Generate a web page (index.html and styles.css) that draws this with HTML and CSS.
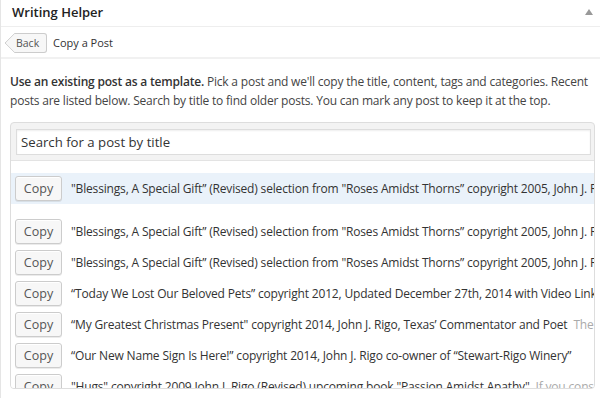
FILE: index.html
```html
<!DOCTYPE html>
<html>
<head>
<meta charset="utf-8">
<link rel="stylesheet" href="styles.css">
</head>
<body>
<div class="postbox">
  <div class="hndle">
    <span class="title">Writing Helper</span>
    <span class="toggle"></span>
  </div>
  <div class="nav">
    <span class="back">Back</span>
    <span class="nav-title">Copy a Post</span>
  </div>
  <div class="inside">
    <p class="intro"><strong>Use an existing post as a template.</strong> Pick a post and we'll copy the title, content, tags and categories. Recent posts are listed below. Search by title to find older posts. You can mark any post to keep it at the top.</p>
    <div class="box">
      <div class="search-wrap">
        <input class="search" type="text" value="Search for a post by title">
      </div>
      <ul class="list">
        <li class="row marked"><span class="btn">Copy</span><span class="ttl">"Blessings, A Special Gift” (Revised) selection from "Roses Amidst Thorns” copyright 2005, John J. Rigo</span></li>
        <li class="row"><span class="btn">Copy</span><span class="ttl">"Blessings, A Special Gift” (Revised) selection from "Roses Amidst Thorns” copyright 2005, John J. Rigo</span></li>
        <li class="row"><span class="btn">Copy</span><span class="ttl">"Blessings, A Special Gift” (Revised) selection from "Roses Amidst Thorns” copyright 2005, John J. Rigo</span></li>
        <li class="row"><span class="btn">Copy</span><span class="ttl">“Today We Lost Our Beloved Pets” copyright 2012, Updated December 27th, 2014 with Video Link</span></li>
        <li class="row"><span class="btn">Copy</span><span class="ttl">“My Greatest Christmas Present" copyright 2014, John J. Rigo, Texas’ Commentator and Poet <span class="ex">The</span></span></li>
        <li class="row"><span class="btn">Copy</span><span class="ttl">“Our New Name Sign Is Here!” copyright 2014, John J. Rigo co-owner of “Stewart-Rigo Winery”</span></li>
        <li class="row"><span class="btn">Copy</span><span class="ttl">"Hugs" copyright 2009 John J. Rigo (Revised) upcoming book "Passion Amidst Apathy" <span class="ex">If you consider</span></span></li>
      </ul>
    </div>
  </div>
</div>
</body>
</html>
```

FILE: styles.css
```css
html, body {
  margin: 0;
  padding: 0;
  background: #fff;
}
body {
  font-family: "Open Sans", "DejaVu Sans", sans-serif;
  color: #444;
  overflow: hidden;
  height: 398px;
}
.postbox {
  border-left: 1px solid #e5e5e5;
  height: 398px;
  box-sizing: border-box;
  overflow: hidden;
}
.hndle {
  height: 27px;
  border-bottom: 1px solid #eee;
  display: flex;
  align-items: center;
  justify-content: space-between;
  padding: 0 7px 0 11px;
  box-sizing: border-box;
}
.title {
  font-size: 13px;
  font-weight: 600;
  color: #222;
  line-height: 20px;
  margin-top: -2px;
}
.toggle {
  width: 0;
  height: 0;
  border-left: 4px solid transparent;
  border-right: 4px solid transparent;
  border-bottom: 6px solid #999;
  margin-top: -3px;
}
.nav {
  height: 32px;
  border-bottom: 2px solid #f1f1f1;
  display: flex;
  align-items: center;
  padding-left: 9px;
  box-sizing: border-box;
}
.back {
  position: relative;
  z-index: 0;
  width: 33px;
  height: 20px;
  box-sizing: border-box;
  border: 1px solid #ccc;
  border-left: none;
  border-radius: 0 3px 3px 0;
  background: #f7f7f7;
  font-size: 10.5px;
  color: #555;
  line-height: 18px;
  padding: 0 0 0 2px;
  margin-left: 4px;
  margin-top: 1px;
}
.back::before {
  content: "";
  position: absolute;
  z-index: -1;
  left: -7px;
  top: 2px;
  width: 13px;
  height: 13px;
  background: #f7f7f7;
  border-left: 1px solid #ccc;
  border-bottom: 1px solid #ccc;
  border-radius: 0 0 0 2px;
  transform: rotate(45deg);
}
.nav-title {
  font-size: 11px;
  color: #333;
  margin-left: 6px;
}
.inside {
  padding: 0 5px 0 9px;
}
.intro {
  margin: 13px 0 12px;
  font-size: 12px;
  letter-spacing: -0.2px;
  line-height: 19px;
  color: #444;
}
.intro strong {
  font-weight: 600;
  color: #333;
}
.box {
  border: 1px solid #ddd;
  border-radius: 4px;
  background: #f3f3f3;
  height: 267px;
  overflow: hidden;
  box-sizing: border-box;
}
.search-wrap {
  padding: 6px 3px 5px 5px;
  border-bottom: 1px solid #e3e3e3;
}
.search {
  display: block;
  width: 100%;
  box-sizing: border-box;
  height: 26px;
  border: 1px solid #ddd;
  background: #fff;
  font-family: "Open Sans", sans-serif;
  font-size: 13.2px;
  color: #333;
  padding: 0 4px;
  margin: 0;
  outline: none;
  box-shadow: inset 0 1px 2px rgba(0,0,0,0.07);
}
.list {
  list-style: none;
  margin: 0;
  padding: 12px 0 0;
  background: #fff;
  height: 400px;
}
.row {
  display: flex;
  align-items: center;
  padding: 3px 5px 3px 4px;
  height: 31px;
  box-sizing: border-box;
  white-space: nowrap;
}
.row.marked {
  background: #eaf2fa;
  margin-bottom: 12px;
}
.btn {
  flex: none;
  display: inline-block;
  width: 47px;
  height: 25px;
  box-sizing: border-box;
  border: 1px solid #ccc;
  border-radius: 3px;
  background: #f7f7f7;
  box-shadow: inset 0 1px 0 #fff, 0 1px 0 rgba(0,0,0,0.08);
  font-size: 12.5px;
  line-height: 23px;
  text-align: center;
  color: #555;
}
.ttl {
  margin-left: 9px;
  font-size: 12px;
  letter-spacing: -0.17px;
  color: #333;
}
.ex {
  color: #aaa;
  margin-left: 3px;
}
```
